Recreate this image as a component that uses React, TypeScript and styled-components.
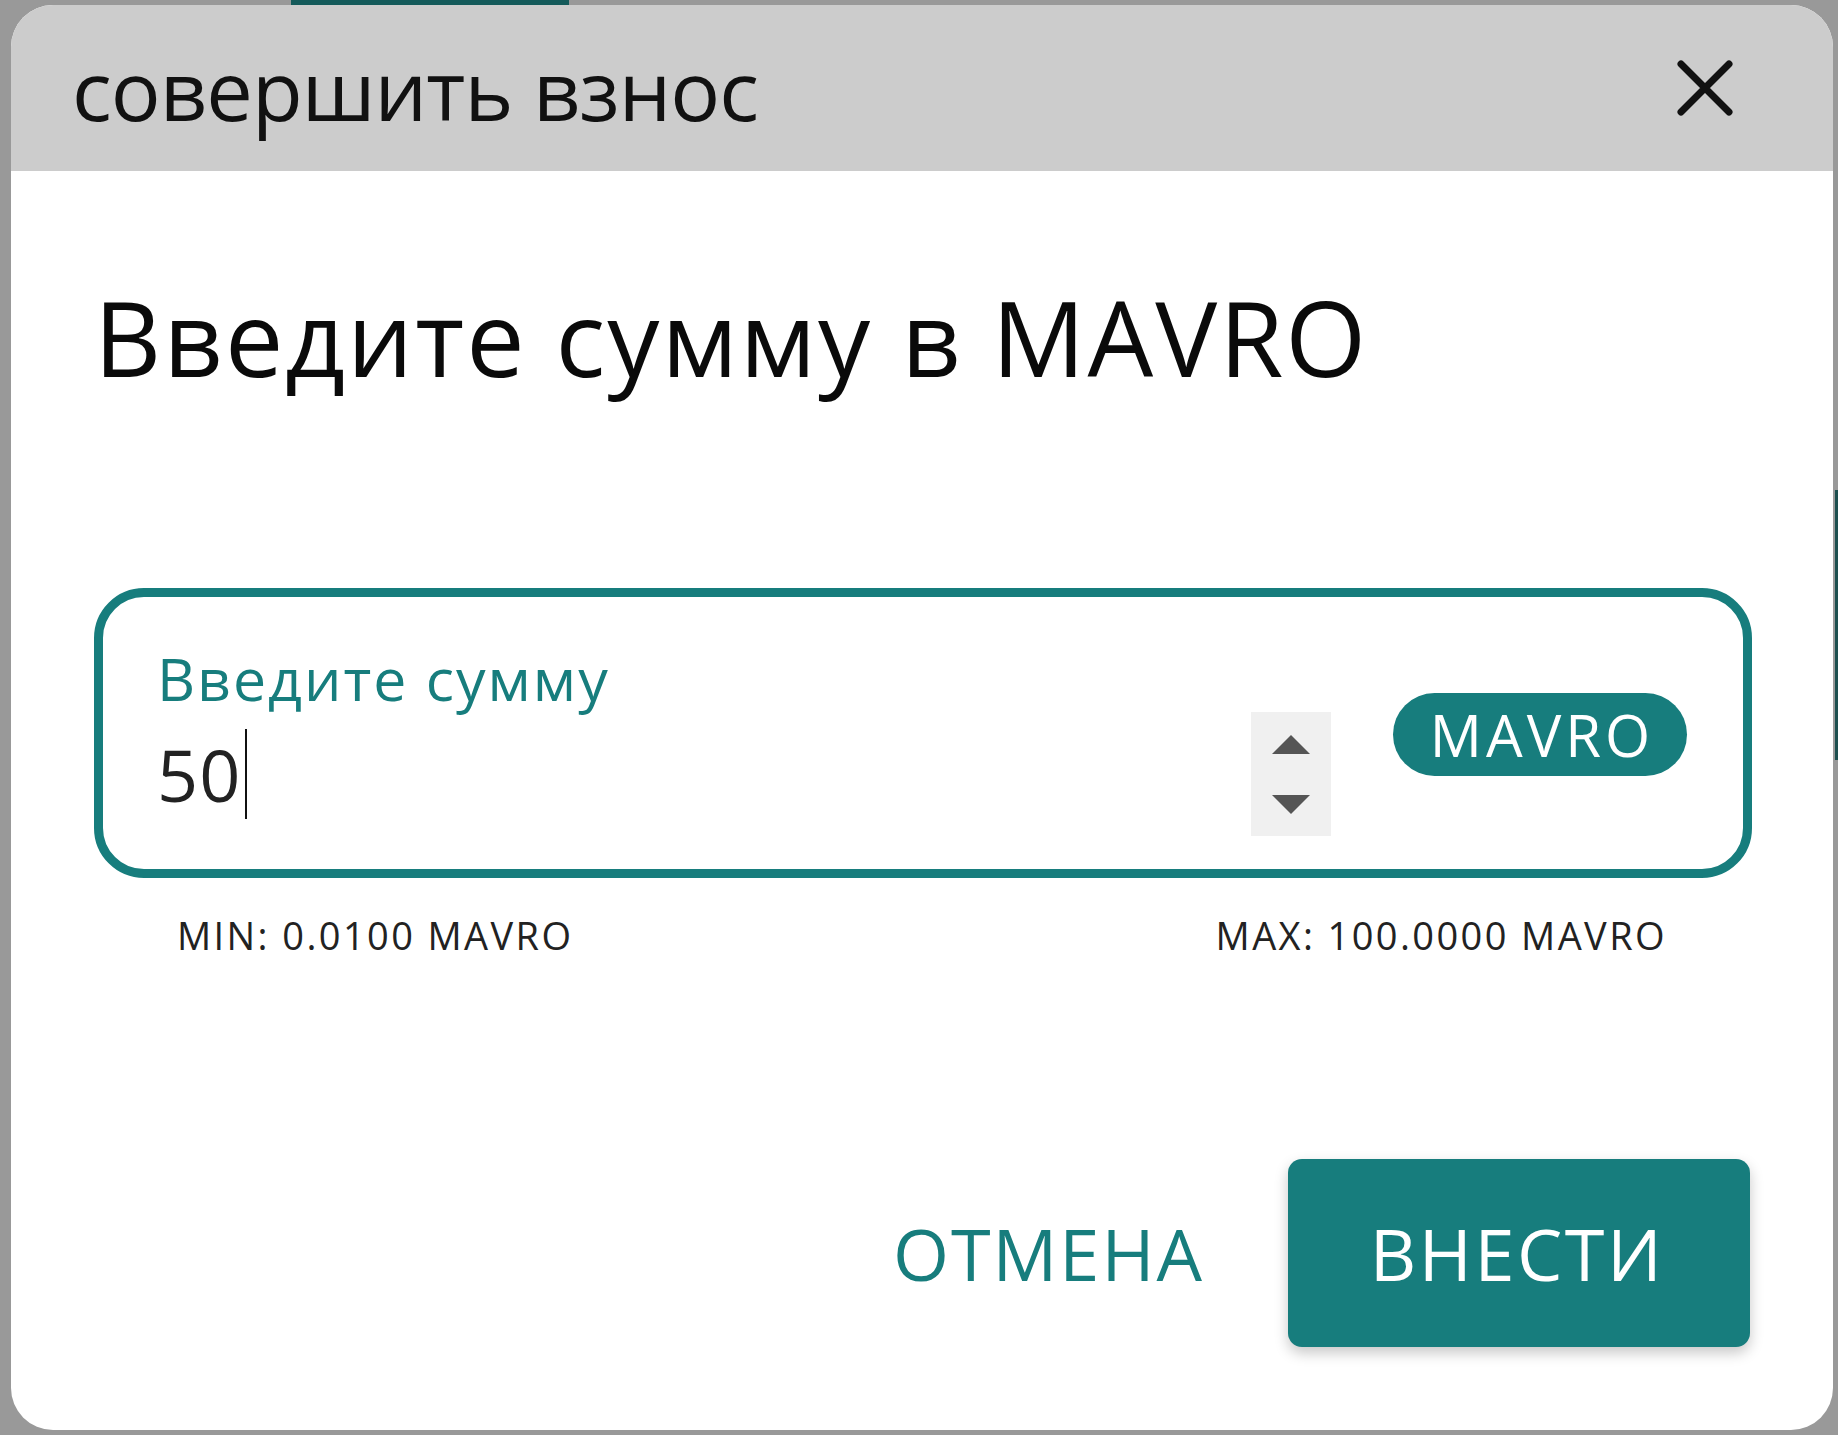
import React from "react";
import styled, { createGlobalStyle } from "styled-components";

const TEAL = "#177d7d";

const GlobalStyle = createGlobalStyle`
  html, body {
    margin: 0;
    padding: 0;
    background: #999999;
    font-family: "Open Sans", "Noto Sans", sans-serif;
  }
  * { box-sizing: border-box; }
`;

const Backdrop = styled.div`
  position: relative;
  width: 1838px;
  height: 1435px;
  padding: 5px 5px 5px 11px;
  background: #999999;
  overflow: hidden;

  &::before {
    content: "";
    position: absolute;
    left: 291px;
    top: 0;
    width: 278px;
    height: 5px;
    background: #145a5a;
  }
  &::after {
    content: "";
    position: absolute;
    right: 0;
    top: 490px;
    width: 3px;
    height: 270px;
    background: #1d4f4f;
  }
`;

const Modal = styled.div`
  position: relative;
  width: 100%;
  height: 100%;
  background: #ffffff;
  border-radius: 42px;
  overflow: hidden;
  display: flex;
  flex-direction: column;
`;

const Header = styled.header`
  height: 166px;
  flex: 0 0 166px;
  background: #cccccc;
  display: flex;
  align-items: center;
  justify-content: space-between;
  padding: 0 100px 0 61px;
`;

const Title = styled.h2`
  margin: 0;
  font-size: 83px;
  line-height: 1;
  font-weight: 400;
  letter-spacing: -1px;
  color: #111111;
`;

const CloseButton = styled.button`
  width: 56px;
  height: 56px;
  padding: 0;
  border: none;
  background: transparent;
  display: flex;
  align-items: center;
  justify-content: center;
  cursor: pointer;
`;

const Body = styled.div`
  flex: 1;
  display: flex;
  flex-direction: column;
  padding: 114px 81px 83px 83px;
`;

const Heading = styled.h1`
  margin: 0 0 199px 0;
  font-size: 104px;
  line-height: 1;
  font-weight: 400;
  letter-spacing: 2px;
  color: #0a0a0a;
`;

const AmountBox = styled.div`
  height: 290px;
  border: 9px solid ${TEAL};
  border-radius: 50px;
  display: flex;
  align-items: flex-start;
  padding: 52px 56px 0 54px;
`;

const Field = styled.div`
  flex: 1;
  display: flex;
  flex-direction: column;
  gap: 4px;
`;

const Label = styled.label`
  font-size: 59px;
  line-height: 1;
  letter-spacing: 2px;
  color: ${TEAL};
`;

const InputRow = styled.div`
  height: 124px;
  display: flex;
  align-items: center;
`;

const Value = styled.div`
  flex: 1;
  display: flex;
  align-items: center;
  font-size: 72px;
  line-height: 1;
  letter-spacing: 1px;
  color: #222222;
`;

const Caret = styled.span`
  display: inline-block;
  width: 2px;
  height: 90px;
  margin-left: 4px;
  background: #111111;
`;

const Spinner = styled.div`
  width: 80px;
  height: 124px;
  background: #f0f0f0;
  display: flex;
  flex-direction: column;
  align-items: center;
  justify-content: space-between;
  padding: 23px 0 22px;
`;

const Arrow = styled.span<{ $down?: boolean }>`
  width: 0;
  height: 0;
  border-left: 19px solid transparent;
  border-right: 19px solid transparent;
  ${(p) =>
    p.$down
      ? `border-top: 19px solid #555555;`
      : `border-bottom: 19px solid #555555;`}
`;

const CurrencyPill = styled.span`
  align-self: center;
  margin-left: 62px;
  margin-top: -49px;
  width: 294px;
  height: 83px;
  border-radius: 42px;
  background: ${TEAL};
  color: #ffffff;
  font-size: 58px;
  line-height: 1;
  letter-spacing: 4px;
  display: flex;
  align-items: center;
  justify-content: center;
  padding-left: 4px;
`;

const Limits = styled.div`
  display: flex;
  justify-content: space-between;
  margin: 38px 0 0 0;
  padding: 0 85px 0 83px;
  font-size: 38px;
  line-height: 1;
  letter-spacing: 2.4px;
  color: #222222;
`;

const Actions = styled.div`
  margin-top: auto;
  display: flex;
  justify-content: flex-end;
  align-items: center;
  gap: 84px;
  padding-right: 2px;
`;

const TextButton = styled.button`
  border: none;
  background: transparent;
  padding: 0;
  font-family: inherit;
  font-size: 72px;
  line-height: 1;
  letter-spacing: 2px;
  color: ${TEAL};
  cursor: pointer;
`;

const PrimaryButton = styled.button`
  width: 462px;
  height: 188px;
  border: none;
  border-radius: 14px;
  background: ${TEAL};
  color: #ffffff;
  font-family: inherit;
  font-size: 72px;
  line-height: 1;
  letter-spacing: 2.5px;
  padding-left: 2px;
  box-shadow: 0 6px 14px rgba(0, 0, 0, 0.22);
  cursor: pointer;
`;

export default function App() {
  return (
    <>
      <GlobalStyle />
      <Backdrop>
        <Modal>
          <Header>
            <Title>совершить взнос</Title>
            <CloseButton aria-label="close">
              <svg width="56" height="56" viewBox="0 0 56 56">
                <path
                  d="M4 4 L52 52 M52 4 L4 52"
                  stroke="#111"
                  strokeWidth="7"
                  strokeLinecap="round"
                  fill="none"
                />
              </svg>
            </CloseButton>
          </Header>
          <Body>
            <Heading>Введите сумму в MAVRO</Heading>
            <AmountBox>
              <Field>
                <Label>Введите сумму</Label>
                <InputRow>
                  <Value>
                    50
                    <Caret />
                  </Value>
                  <Spinner>
                    <Arrow />
                    <Arrow $down />
                  </Spinner>
                </InputRow>
              </Field>
              <CurrencyPill>MAVRO</CurrencyPill>
            </AmountBox>
            <Limits>
              <span>MIN: 0.0100 MAVRO</span>
              <span>MAX: 100.0000 MAVRO</span>
            </Limits>
            <Actions>
              <TextButton>ОТМЕНА</TextButton>
              <PrimaryButton>ВНЕСТИ</PrimaryButton>
            </Actions>
          </Body>
        </Modal>
      </Backdrop>
    </>
  );
}
